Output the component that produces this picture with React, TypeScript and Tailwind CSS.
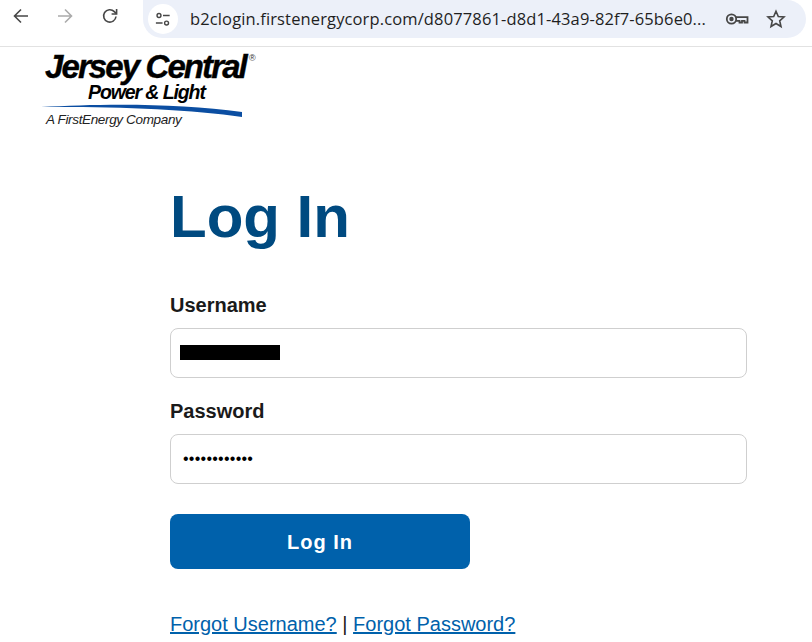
import React from 'react';

const BrowserBar = () => {
  return (
    <div className="h-[47px] border-b border-[#e2e2e2] bg-white flex items-start">
      <div className="w-[143px] h-[32px] shrink-0 flex items-center">
        <svg className="ml-[12px]" width="18" height="18" viewBox="0 0 18 18" fill="none" stroke="#474747" strokeWidth="1.6">
          <path d="M16 9H2.5M9 2.5L2.5 9L9 15.5" />
        </svg>
        <svg className="ml-[26px]" width="18" height="18" viewBox="0 0 18 18" fill="none" stroke="#ababab" strokeWidth="1.6">
          <path d="M2 9h13.5M9 2.5L15.5 9L9 15.5" />
        </svg>
        <svg className="ml-[27px]" width="18" height="18" viewBox="0 0 18 18" fill="none" stroke="#474747" strokeWidth="1.6">
          <path d="M15 9.5A6.2 6.2 0 1 1 13.3 4.6L15.5 6.8" />
          <path d="M15.6 2V7H10.6" />
        </svg>
      </div>
      <div className="w-[663px] h-[38px] bg-[#ecf0f9] rounded-r-[19px] rounded-bl-[19px] flex items-center">
        <div className="ml-[5px] w-[30px] h-[30px] rounded-full bg-white flex items-center justify-center shrink-0">
          <svg width="16" height="15" viewBox="0 0 18 16" fill="none" stroke="#474747" strokeWidth="1.6">
            <circle cx="4.5" cy="3.5" r="2.2" />
            <path d="M9 3.5h7.5M1 12h7.5" />
            <circle cx="13" cy="12" r="2.2" />
          </svg>
        </div>
        <div className="ml-[12px] w-[518px] shrink-0 text-[16.5px] text-[#1f1f1f] font-['Open_Sans',sans-serif] whitespace-nowrap overflow-hidden tracking-[0.13px]">
          b2clogin.firstenergycorp.com/d8077861-d8d1-43a9-82f7-65b6e0...
        </div>
        <svg className="ml-[17px] shrink-0" width="24" height="14" viewBox="0 0 24 14" fill="none" stroke="#474747" strokeWidth="1.8">
          <circle cx="6.5" cy="7" r="4.7" />
          <circle cx="6.5" cy="7" r="1.3" fill="#474747" />
          <path d="M11 5.2H22.5V10.5H19.5V8.8H17V10.5H14.5V8.8H11" />
        </svg>
        <svg className="ml-[17px] shrink-0" width="20" height="20" viewBox="0 0 20 20" fill="none" stroke="#474747" strokeWidth="1.6">
          <path d="M10 2.2L12.3 7.5L18 8L13.7 11.8L15 17.5L10 14.5L5 17.5L6.3 11.8L2 8L7.7 7.5Z" />
        </svg>
      </div>
    </div>
  );
};

const Logo = () => {
  return (
    <div className="ml-[41px] w-[215px] h-[84px] font-['Liberation_Sans',sans-serif] italic text-black relative">
      <div className="pl-[4px] pt-[5px] text-[33px] leading-[30px] font-bold tracking-[-1.9px] whitespace-nowrap [-webkit-text-stroke:0.4px_black]">
        Jersey Central
      </div>
      <div className="pl-[47px] text-[19.5px] leading-[21px] font-bold tracking-[-1.1px] whitespace-nowrap">
        Power &amp; Light
      </div>
      <div className="pl-[5px] mt-[9px] text-[13.5px] leading-[16px] tracking-[-0.35px] text-[#222] whitespace-nowrap">
        A FirstEnergy Company
      </div>
      {/* registered mark and swoosh sit over the wordmark */}
      <span className="absolute left-[208px] top-[7px] text-[9px] leading-[9px] not-italic text-[#333]">®</span>
      <svg className="absolute left-0 top-[57px]" width="204" height="14" viewBox="0 0 204 14">
        <path d="M0 3C60 -0.5 140 -1 201 8L201 13C150 5 70 2.5 0 3Z" fill="#0b4ea2" />
      </svg>
    </div>
  );
};

const Field = ({ label, children }: { label: string; children: React.ReactNode }) => {
  return (
    <div>
      <div className="text-[20px] leading-[23px] font-bold text-[#1a1a1a] mb-[11px]">{label}</div>
      <div className="h-[50px] w-[577px] rounded-[8px] border border-[#cfcfcf] bg-white flex items-center">
        {children}
      </div>
    </div>
  );
};

export default function App() {
  return (
    <div className="w-[812px] h-[642px] overflow-hidden bg-white font-['Liberation_Sans',sans-serif]">
      <BrowserBar />
      <Logo />
      <div className="ml-[170px] w-[577px]">
        <h1 className="mt-[49px] text-[60px] leading-[74px] font-bold text-[#004a80]">Log In</h1>
        <div className="mt-[40px]">
          <Field label="Username">
            <div className="ml-[9px] mb-[1px] w-[100px] h-[15px] bg-black" />
          </Field>
        </div>
        <div className="mt-[22px]">
          <Field label="Password">
            <input
              type="password"
              readOnly
              value="abcdefghijkl"
              className="ml-[12px] w-[300px] text-[16px] text-black outline-none bg-transparent tracking-[0.25px]"
            />
          </Field>
        </div>
        <button className="mt-[30px] w-[300px] h-[55px] rounded-[8px] bg-[#0061ab] text-white text-[20px] font-bold tracking-[1px]">
          Log In
        </button>
        <div className="mt-[44px] text-[20px] leading-[23px] text-[#1a1a1a] whitespace-nowrap">
          <a href="#" className="text-[#0061ab] underline">Forgot Username?</a>
          {' | '}
          <a href="#" className="text-[#0061ab] underline">Forgot Password?</a>
        </div>
      </div>
    </div>
  );
}
